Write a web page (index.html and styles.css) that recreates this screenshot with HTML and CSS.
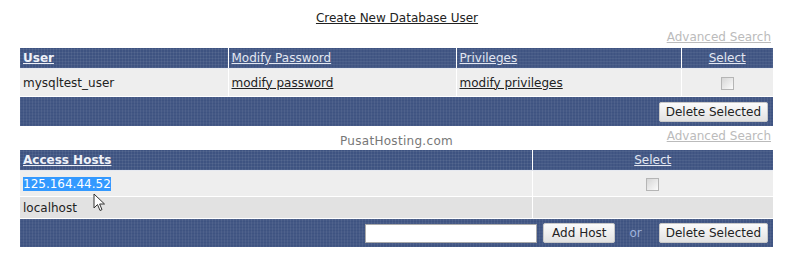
FILE: index.html
```html
<!DOCTYPE html>
<html>
<head>
<meta charset="utf-8">
<link rel="stylesheet" href="styles.css">
</head>
<body>
<div class="page">
  <div class="title"><a href="#">Create New Database User</a></div>
  <div class="adv"><a href="#">Advanced Search</a></div>
  <table class="grid users">
    <colgroup>
      <col style="width:208px"><col style="width:228px"><col style="width:225px"><col>
    </colgroup>
    <tr class="head">
      <th><a href="#" class="sorted">User</a></th>
      <th><a href="#">Modify Password</a></th>
      <th><a href="#">Privileges</a></th>
      <th class="c"><a href="#">Select</a></th>
    </tr>
    <tr class="row">
      <td>mysqltest_user</td>
      <td><a href="#" class="dark">modify password</a></td>
      <td><a href="#" class="dark">modify privileges</a></td>
      <td class="c"><span class="cb"></span></td>
    </tr>
    <tr class="foot">
      <td colspan="4"><div class="foot-in"><button class="btn del">Delete Selected</button></div></td>
    </tr>
  </table>
  <div class="mid">
    <span class="brand">PusatHosting.com</span>
    <a href="#" class="adv2">Advanced Search</a>
  </div>
  <table class="grid hosts">
    <colgroup>
      <col style="width:512px"><col>
    </colgroup>
    <tr class="head">
      <th><a href="#" class="sorted">Access Hosts</a></th>
      <th class="c"><a href="#">Select</a></th>
    </tr>
    <tr class="row">
      <td><span class="sel">125.164.44.52</span></td>
      <td class="c"><span class="cb"></span></td>
    </tr>
    <tr class="row alt">
      <td>localhost</td>
      <td></td>
    </tr>
    <tr class="foot">
      <td colspan="2"><div class="foot-in"><input class="inp" type="text"><button class="btn add">Add Host</button><span class="or">or</span><button class="btn del">Delete Selected</button></div></td>
    </tr>
  </table>
  <svg class="cursor" width="14" height="20" viewBox="0 0 14 20"><path d="M1 1 L1 15 L4.5 11.5 L7 17.5 L9 16.6 L6.6 11 L11.5 11 Z" fill="#fff" stroke="#333" stroke-width="1" stroke-linejoin="round"/></svg>
</div>
</body>
</html>
```
FILE: styles.css
```css
html, body { margin: 0; padding: 0; background: #fff; }
body { font-family: "DejaVu Sans", Verdana, sans-serif; font-size: 12px; color: #222; }
.page { position: relative; width: 753px; margin-left: 20px; padding-top: 10px; }
.title { text-align: center; height: 18px; line-height: 16px; padding-left: 1px; }
.title a { color: #222; text-decoration: underline; }
.adv { text-align: right; height: 20px; line-height: 18px; padding-right: 2px; }
.adv a, .adv2 { color: #bbb; text-decoration: underline; }
.grid { width: 753px; border-collapse: collapse; table-layout: fixed; }
.grid th, .grid td { padding: 0 3px; text-align: left; }
.grid .c { text-align: center; }
.head th {
  height: 20px; font-weight: normal;
  background-color: #3e5381;
  background-image:
    repeating-linear-gradient(90deg, rgba(255,255,255,0.06) 0 1px, transparent 1px 3px),
    repeating-linear-gradient(0deg, rgba(255,255,255,0.06) 0 1px, transparent 1px 3px);
  border-left: 1px solid #fff;
  border-bottom: 1px solid #e6e9f0;
}
.head th:first-child { border-left: 0; }
.head a { color: #e2e7f2; text-decoration: underline; }
.head a.sorted { font-weight: bold; color: #eef1f8; }
.row td { height: 27px; background: #eeeeee; border-left: 1px solid #fff; border-bottom: 1px solid #fff; }
.row td:first-child { border-left: 0; }
.row.alt td { height: 20px; background: #e2e2e2; }
.hosts .row td { height: 25px; }
.hosts .row.alt td { height: 21px; }
a.dark { color: #222; }
.foot td {
  padding: 0;
  background-color: #3e5381;
  background-image:
    repeating-linear-gradient(90deg, rgba(255,255,255,0.06) 0 1px, transparent 1px 3px),
    repeating-linear-gradient(0deg, rgba(255,255,255,0.06) 0 1px, transparent 1px 3px);
}
.foot-in { display: flex; justify-content: flex-end; align-items: center; height: 29px; padding-right: 5px; }
.hosts .foot-in { height: 28px; }
.btn {
  font-family: "DejaVu Sans", Verdana, sans-serif; font-size: 12px; color: #222;
  height: 20px; padding: 0 6px; border: 1px solid #c8c8c8; border-radius: 2px;
  background: linear-gradient(#fbfbfb, #e2e2e2);
}
.btn.add { padding: 0 8px; }
.inp { width: 172px; height: 19px; box-sizing: border-box; border: 1px solid #aaa; background: #fff; margin-right: 6px; padding: 0; }
.or { color: #9fb3dc; margin: 0 17px 0 14px; }
.cb { display: inline-block; width: 11px; height: 11px; border: 1px solid #b5b5b5; background: linear-gradient(135deg, #d6d6d6, #fbfbfb); vertical-align: middle; }
.mid { position: relative; height: 24px; text-align: center; }
.brand { color: #777; line-height: 30px; letter-spacing: 0.3px; }
.adv2 { position: absolute; right: 2px; top: 2px; line-height: 16px; }
.sel { background: #3399ff; color: #fff; }
.cursor { position: absolute; left: 73px; top: 193px; }
```
